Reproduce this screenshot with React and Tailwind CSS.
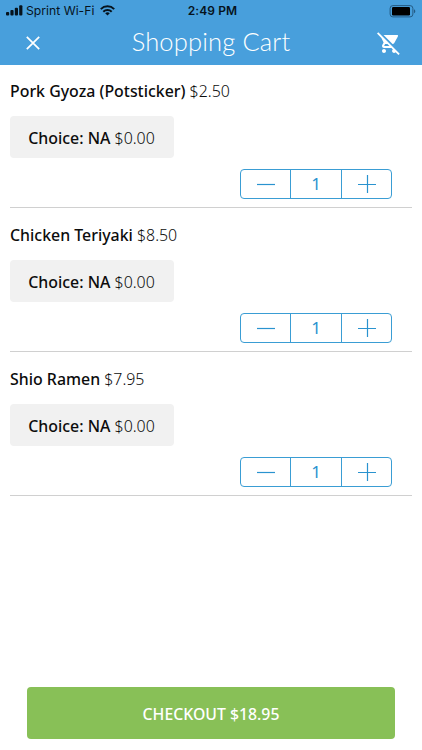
import { useState } from "react";

const initItems = [
  { id: 1, name: "Pork Gyoza (Potsticker)", price: 2.5, qty: 1 },
  { id: 2, name: "Chicken Teriyaki", price: 8.5, qty: 1 },
  { id: 3, name: "Shio Ramen", price: 7.95, qty: 1 },
];

const StatusBar = () => {
  return (
    <div className="grid h-[22px] grid-cols-3 items-center px-[6px] font-['Inter','Liberation_Sans',sans-serif] text-[#06131d]">
      <div className="flex items-center">
        <svg width="17" height="11" viewBox="0 0 17 11" fill="currentColor">
          <rect x="0" y="7" width="3.2" height="3.6" rx="1" />
          <rect x="4.4" y="5" width="3.2" height="5.6" rx="1" />
          <rect x="8.8" y="2.8" width="3.2" height="7.8" rx="1" />
          <rect x="13.2" y="0.2" width="3.2" height="10.4" rx="1" />
        </svg>
        <span className="ml-[3px] whitespace-nowrap text-[12.2px]">Sprint Wi-Fi</span>
        <svg
          className="ml-[6px] shrink-0"
          width="15"
          height="11"
          viewBox="0 0 15 11"
          fill="none"
          stroke="currentColor"
          strokeWidth="2"
        >
          <path d="M0.8 4.1a9.5 9.5 0 0 1 13.4 0" />
          <path d="M3.3 6.7a6 6 0 0 1 8.4 0" />
          <path d="M7.5 10.6 5.2 8.3a3.3 3.3 0 0 1 4.6 0z" fill="currentColor" stroke="none" />
        </svg>
      </div>
      <div className="pl-[3px] text-center text-[12px] font-semibold tracking-[0.1px]">2:49 PM</div>
      <svg className="justify-self-end" width="27" height="13" viewBox="0 0 27 13">
        <rect x="1.1" y="0.6" width="22.8" height="11.3" rx="2.8" fill="none" stroke="#245b84" strokeWidth="1" />
        <rect x="3" y="2" width="18" height="8.5" rx="1.2" fill="#000" />
        <path d="M25 4.3v4c1.8-.7 1.8-3.3 0-4z" fill="#245b84" />
      </svg>
    </div>
  );
};

const Header = () => {
  return (
    <header className="h-[65px] bg-[#489fdc]">
      <StatusBar />
      <div className="flex h-[42px] items-center justify-between pl-[26px] pr-[21px] text-white">
        <button className="w-[24px]" aria-label="Close">
          <svg width="14" height="14" viewBox="0 0 14 14" stroke="currentColor" strokeWidth="1.7">
            <path d="M0.8 0.8 13.2 13.2M13.2 0.8 0.8 13.2" />
          </svg>
        </button>
        <h1 className="pb-[2px] pr-[5px] font-['Lato',sans-serif] text-[25.5px] font-light leading-none tracking-[0.15px]">
          Shopping Cart
        </h1>
        <button aria-label="Empty cart">
          <svg width="24" height="24" viewBox="0 0 24 24" fill="currentColor">
            <path d="M22.73 22.73 2.77 2.77 2 2l-.73-.73L0 2.54l4.39 4.39 2.21 4.66-1.35 2.45c-.16.28-.25.61-.25.96 0 1.1.9 2 2 2h7.46l1.38 1.38A1.997 1.997 0 0 0 17 22c.67 0 1.26-.33 1.62-.84L21.46 24l1.27-1.27zM7.42 15c-.14 0-.25-.11-.25-.25l.03-.12.9-1.63h2.36l2 2H7.42zm8.13-2c.75 0 1.41-.41 1.75-1.03l3.58-6.49A.996.996 0 0 0 20.01 4H6.54l9.01 9zM7 18c-1.1 0-1.99.9-1.99 2S5.9 22 7 22s2-.9 2-2-.9-2-2-2z" />
          </svg>
        </button>
      </div>
    </header>
  );
};

const Stepper = ({ qty, changeQty }) => {
  return (
    <div className="flex h-[30px] w-[152px] divide-x divide-[#3a9dd4] rounded-[4px] border border-[#3a9dd4] text-[#2a93cf]">
      <button className="flex w-[50px] items-center justify-center" onClick={() => changeQty(-1)} aria-label="Less">
        <svg width="18" height="18" viewBox="0 0 18 18" stroke="currentColor" strokeWidth="1.2">
          <path d="M0 9.5h18" />
        </svg>
      </button>
      <div className="flex w-[51px] items-center justify-center text-[17px]">{qty}</div>
      <button className="flex flex-1 items-center justify-center" onClick={() => changeQty(1)} aria-label="More">
        <svg width="18" height="18" viewBox="0 0 18 18" stroke="currentColor" strokeWidth="1.2">
          <path d="M0 9.5h18M9.5 0v18" />
        </svg>
      </button>
    </div>
  );
};

const CartItem = ({ item, changeQty }) => {
  return (
    <li className="flex h-[144px] flex-col border-b border-[#d0d0d0] pt-[15px]">
      <div className="h-[24px] text-[15.9px] leading-[24px]">
        <span className="font-medium">{item.name}</span>{" "}
        <span className="font-light">${item.price.toFixed(2)}</span>
      </div>
      <div className="mt-[13px] flex h-[42px] w-[164px] items-center justify-center rounded-[4px] bg-[#f1f1f1] pr-[1px] pt-[3px] text-[15.9px]">
        <div className="whitespace-nowrap">
          <span className="font-medium">Choice: NA</span>{" "}
          <span className="font-light">$0.00</span>
        </div>
      </div>
      <div className="mt-[11px] flex justify-end pr-[20px]">
        <Stepper qty={item.qty} changeQty={changeQty} />
      </div>
    </li>
  );
};

const App = () => {
  const [items, setItems] = useState([...initItems]);

  const handleChangeQty = (id, diff) => {
    setItems(
      items.map((item) =>
        item.id === id ? { ...item, qty: Math.max(0, item.qty + diff) } : item
      )
    );
  };

  const total = items.reduce((sum, item) => sum + item.price * item.qty, 0);

  return (
    <div className="flex h-[750px] w-[422px] flex-col bg-white font-['Noto_Sans','Open_Sans',sans-serif] text-[#0c0c0c]">
      <Header />
      <ul className="-mt-px flex-1 px-[10px]">
        {items.map((item) => (
          <CartItem
            key={item.id}
            item={item}
            changeQty={(diff) => handleChangeQty(item.id, diff)}
          />
        ))}
      </ul>
      <div className="px-[27px] pb-[11px]">
        <button className="h-[52px] w-full rounded-[4px] bg-[#88c057] pt-[3px] text-[15.8px] font-medium text-white">
          CHECKOUT ${total.toFixed(2)}
        </button>
      </div>
    </div>
  );
};

export default App;
